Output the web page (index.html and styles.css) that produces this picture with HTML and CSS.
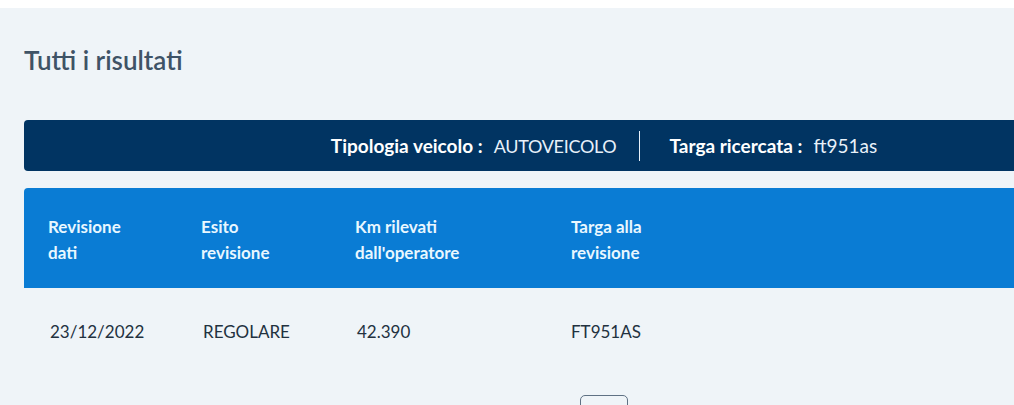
FILE: index.html
```html
<!DOCTYPE html>
<html lang="it">
<head>
<meta charset="UTF-8">
<meta name="viewport" content="width=device-width, initial-scale=1.0">
<title>Tutti i risultati</title>
<link rel="stylesheet" href="styles.css">
</head>
<body>
  <div id="results">
    <h2 class="results-title">Tutti i risultati</h2>

    <div class="search-bar">
      <span class="search-label">Tipologia veicolo :</span>
      <span class="search-value upper">AUTOVEICOLO</span>
      <span class="search-sep"></span>
      <span class="search-label">Targa ricercata :</span>
      <span class="search-value">ft951as</span>
    </div>

    <div class="table">
      <div class="table-head">
        <div class="cell col-1">Revisione<br>dati</div>
        <div class="cell col-2">Esito<br>revisione</div>
        <div class="cell col-3">Km rilevati<br>dall'operatore</div>
        <div class="cell col-4">Targa alla<br>revisione</div>
      </div>
      <div class="table-row">
        <div class="cell col-1">23/12/2022</div>
        <div class="cell col-2">REGOLARE</div>
        <div class="cell col-3">42.390</div>
        <div class="cell col-4">FT951AS</div>
      </div>
    </div>

    <div class="pager">
      <button class="page-btn"></button>
    </div>
  </div>
</body>
</html>
```

FILE: styles.css
```css
html, body {
  overflow: hidden;
}
body {
  margin: 0;
  padding: 0;
  font-family: Lato, "Open Sans", sans-serif;
  background-color: #ffffff;
  color: #1c2b3a;
}
#results {
  width: 1160px;
  margin-top: 8px;
  padding: 36px 24px 24px 24px;
  background-color: #eff4f8;
}
.results-title {
  margin: 0 0 44px 0;
  font-size: 26px;
  line-height: 32px;
  font-weight: 600;
  color: #3f5366;
}
.search-bar {
  display: flex;
  align-items: center;
  justify-content: center;
  height: 51px;
  background-color: #013462;
  border-radius: 4px;
  color: #ffffff;
  font-size: 19px;
}
.search-label {
  font-weight: bold;
  margin-right: 11px;
}
.search-value {
  color: #e8f1fa;
}
.search-value.upper {
  font-size: 18px;
  letter-spacing: -0.3px;
}
.search-sep {
  width: 1px;
  height: 30px;
  background-color: #e8f1fa;
  margin: 0 29px 0 23px;
}
.table {
  margin-top: 17px;
}
.table-head {
  display: flex;
  align-items: center;
  height: 100px;
  padding-top: 4px;
  box-sizing: border-box;
  background-color: #0a7cd4;
  border-radius: 4px 4px 0 0;
  color: #e9f7ff;
  font-weight: bold;
  font-size: 17px;
  line-height: 26px;
}
.table-row {
  display: flex;
  align-items: center;
  height: 86px;
  font-size: 17px;
  color: #22313f;
}
.cell {
  padding-left: 24px;
  box-sizing: border-box;
}
.table-row .cell {
  padding-left: 26px;
}
.table-row .col-4 {
  padding-left: 24px;
}
.col-1 { width: 153px; }
.col-2 { width: 154px; }
.col-3 { width: 216px; }
.col-4 { flex: 1; }
.pager {
  display: flex;
  justify-content: center;
  padding-top: 21px;
}
.page-btn {
  width: 48px;
  height: 40px;
  background: #eff4f8;
  border: 1px solid #5f7184;
  border-radius: 5px;
}
```
